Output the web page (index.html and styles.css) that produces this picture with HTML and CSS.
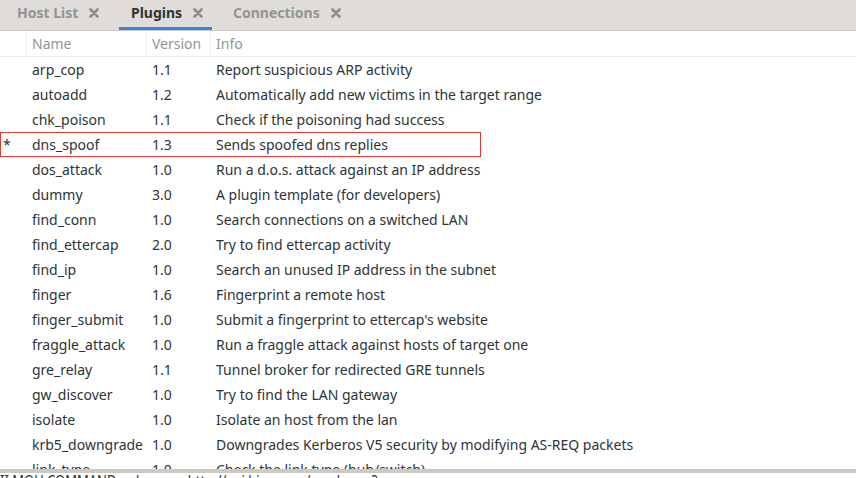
FILE: index.html
```html
<!DOCTYPE html>
<html>
<head>
<meta charset="utf-8">
<link rel="stylesheet" href="styles.css">
</head>
<body>
<div class="tabs">
  <div class="tab tab-host"><span class="tab-label">Host List</span><svg class="x" viewBox="0 0 10 10"><path d="M1.5 1.5L8.5 8.5M8.5 1.5L1.5 8.5"/></svg></div>
  <div class="tab tab-plugins active"><span class="tab-label">Plugins</span><svg class="x" viewBox="0 0 10 10"><path d="M1.5 1.5L8.5 8.5M8.5 1.5L1.5 8.5"/></svg></div>
  <div class="tab tab-conn"><span class="tab-label">Connections</span><svg class="x" viewBox="0 0 10 10"><path d="M1.5 1.5L8.5 8.5M8.5 1.5L1.5 8.5"/></svg></div>
</div>
<div class="table">
  <div class="row head">
    <div class="c0"></div><div class="c1">Name</div><div class="c2">Version</div><div class="c3">Info</div>
  </div>
  <div class="body">
    <div class="row"><div class="c0"></div><div class="c1">arp_cop</div><div class="c2">1.1</div><div class="c3">Report suspicious ARP activity</div></div>
    <div class="row"><div class="c0"></div><div class="c1">autoadd</div><div class="c2">1.2</div><div class="c3">Automatically add new victims in the target range</div></div>
    <div class="row"><div class="c0"></div><div class="c1">chk_poison</div><div class="c2">1.1</div><div class="c3">Check if the poisoning had success</div></div>
    <div class="row sel"><div class="c0">*</div><div class="c1">dns_spoof</div><div class="c2">1.3</div><div class="c3">Sends spoofed dns replies</div></div>
    <div class="row"><div class="c0"></div><div class="c1">dos_attack</div><div class="c2">1.0</div><div class="c3">Run a d.o.s. attack against an IP address</div></div>
    <div class="row"><div class="c0"></div><div class="c1">dummy</div><div class="c2">3.0</div><div class="c3">A plugin template (for developers)</div></div>
    <div class="row"><div class="c0"></div><div class="c1">find_conn</div><div class="c2">1.0</div><div class="c3">Search connections on a switched LAN</div></div>
    <div class="row"><div class="c0"></div><div class="c1">find_ettercap</div><div class="c2">2.0</div><div class="c3">Try to find ettercap activity</div></div>
    <div class="row"><div class="c0"></div><div class="c1">find_ip</div><div class="c2">1.0</div><div class="c3">Search an unused IP address in the subnet</div></div>
    <div class="row"><div class="c0"></div><div class="c1">finger</div><div class="c2">1.6</div><div class="c3">Fingerprint a remote host</div></div>
    <div class="row"><div class="c0"></div><div class="c1">finger_submit</div><div class="c2">1.0</div><div class="c3">Submit a fingerprint to ettercap's website</div></div>
    <div class="row"><div class="c0"></div><div class="c1">fraggle_attack</div><div class="c2">1.0</div><div class="c3">Run a fraggle attack against hosts of target one</div></div>
    <div class="row"><div class="c0"></div><div class="c1">gre_relay</div><div class="c2">1.1</div><div class="c3">Tunnel broker for redirected GRE tunnels</div></div>
    <div class="row"><div class="c0"></div><div class="c1">gw_discover</div><div class="c2">1.0</div><div class="c3">Try to find the LAN gateway</div></div>
    <div class="row"><div class="c0"></div><div class="c1">isolate</div><div class="c2">1.0</div><div class="c3">Isolate an host from the lan</div></div>
    <div class="row"><div class="c0"></div><div class="c1">krb5_downgrade</div><div class="c2">1.0</div><div class="c3">Downgrades Kerberos V5 security by modifying AS-REQ packets</div></div>
    <div class="row last"><div class="c0"></div><div class="c1">link_type</div><div class="c2">1.0</div><div class="c3">Check the link type (hub/switch)</div></div>
  </div>
</div>
<div class="log">
  <div class="log-line">II MOU COMMAND: udp_open http://api.bing.com/qsml.aspx?</div>
</div>
</body>
</html>
```
FILE: styles.css
```css
html, body {
  margin: 0;
  padding: 0;
  background: #ffffff;
  overflow: hidden;
}
body {
  width: 856px;
  height: 478px;
  font-family: "Noto Sans", "Open Sans", sans-serif;
  font-size: 14px;
  color: #2e3436;
  display: flex;
  flex-direction: column;
}
.tabs {
  flex: none;
  background: #e0dcd9;
  border-bottom: 1px solid #cdc7c2;
  display: flex;
  box-sizing: border-box;
  height: 31px;
}
.tab {
  display: flex;
  align-items: center;
  gap: 11px;
  padding: 0 12px 2px 17px;
  color: #929595;
  font-weight: bold;
  box-sizing: border-box;
  height: 30px;
  border-bottom: 3px solid transparent;
}
.tab-host { width: 119px; }
.tab-plugins { width: 93px; padding-left: 12px; }
.tab-conn { padding-left: 21px; }
.tab.active {
  color: #2e3436;
  border-bottom-color: #3584e4;
}
.x {
  flex: none;
  width: 10px;
  height: 10px;
  fill: none;
  stroke: #8b8e8f;
  stroke-width: 2.6;
  stroke-linecap: round;
}
.table {
  flex: 1;
  overflow: hidden;
  min-height: 0;
}
.row {
  display: flex;
  height: 25px;
  align-items: center;
  box-sizing: border-box;
}
.head {
  color: #929595;
  border-bottom: 1px solid #ececec;
  height: 26px;
}
.head > div {
  border-right: 1px solid #ececec;
  height: 100%;
  display: flex;
  align-items: center;
}
.head .c3 { border-right: none; }
.c0 { width: 27px; padding-left: 3px; box-sizing: border-box; }
.c1 { width: 120px; padding-left: 5px; box-sizing: border-box; white-space: nowrap; }
.c2 { width: 64px; padding-left: 5px; box-sizing: border-box; }
.c3 { flex: 1; padding-left: 5px; box-sizing: border-box; white-space: nowrap; }
.sel {
  outline: 1px solid #e53935;
  outline-offset: -1px;
  width: 481px;
}
.log {
  flex: none;
  height: 9px;
  border-top: 4px solid #cdc9c3;
  overflow: hidden;
  box-sizing: border-box;
}
.log-line {
  font-size: 13px;
  line-height: 13px;
  white-space: nowrap;
  color: #2e3436;
  transform: scaleY(1.3);
  transform-origin: top left;
}
```
